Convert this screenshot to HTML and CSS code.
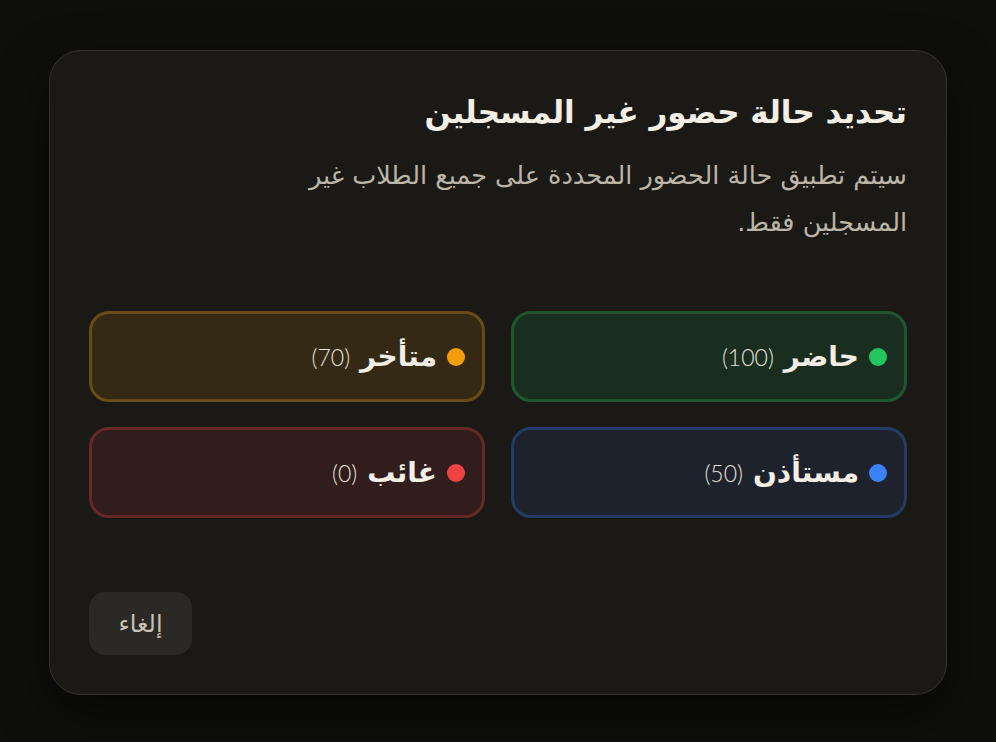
FILE: index.html
```html
<!DOCTYPE html>
<html lang="ar" dir="rtl">
<head>
<meta charset="utf-8">
<title>تحديد حالة حضور غير المسجلين</title>
<link rel="stylesheet" href="styles.css">
</head>
<body>
<div class="page">
  <div class="card">
    <h1 class="title">تحديد حالة حضور غير المسجلين</h1>
    <p class="desc">سيتم تطبيق حالة الحضور المحددة على جميع الطلاب غير المسجلين فقط.</p>
    <div class="options">
      <button class="opt opt-green"><span class="dot"></span><span class="label">حاضر</span><span class="count">(100)</span></button>
      <button class="opt opt-amber"><span class="dot"></span><span class="label">متأخر</span><span class="count">(70)</span></button>
      <button class="opt opt-blue"><span class="dot"></span><span class="label">مستأذن</span><span class="count">(50)</span></button>
      <button class="opt opt-red"><span class="dot"></span><span class="label">غائب</span><span class="count">(0)</span></button>
    </div>
    <div class="footer">
      <button class="cancel">إلغاء</button>
    </div>
  </div>
</div>
</body>
</html>
```
FILE: styles.css
```css
* { box-sizing: border-box; }
html, body {
  margin: 0;
  padding: 0;
  background: #0e0e0d;
}
body {
  font-family: "DejaVu Sans", "Noto Sans", sans-serif;
  width: 996px;
  height: 742px;
  overflow: hidden;
}
.page {
  width: 996px;
  height: 742px;
  display: flex;
  align-items: flex-start;
  justify-content: center;
  padding-top: 50px;
}
.card {
  width: 898px;
  height: 645px;
  background: #1a1916;
  border: 1px solid #34332f;
  border-radius: 32px;
  padding: 39px 39px 39px 39px;
  display: flex;
  flex-direction: column;
  box-shadow: 0 20px 50px rgba(0,0,0,0.5);
}
.title {
  margin: 0;
  font-size: 31px;
  line-height: 44px;
  font-weight: 700;
  color: #f3efe6;
}
.desc {
  margin: 18px 0 0 0;
  font-size: 25.5px;
  line-height: 47px;
  color: #bcb5a8;
  font-weight: 400;
  max-width: 680px;
}
.options {
  margin-top: 65px;
  display: grid;
  grid-template-columns: 1fr 1fr;
  column-gap: 26px;
  row-gap: 25px;
}
.opt {
  height: 91px;
  border: 3px solid;
  border-radius: 20px;
  display: flex;
  align-items: center;
  gap: 10px;
  padding: 0 17px;
  font-family: inherit;
  cursor: pointer;
  text-align: right;
}
.dot {
  width: 18px;
  height: 18px;
  border-radius: 50%;
  flex: none;
}
.label {
  font-size: 28px;
  font-weight: 700;
  color: #f3efe6;
}
.count {
  font-family: "Lato", "Inter", sans-serif;
  font-weight: 300;
  font-size: 23px;
  color: #e6e1d6;
}
.opt-green { background: #1a2e1f; border-color: #1f5630; }
.opt-green .dot { background: #22c55e; }
.opt-amber { background: #342914; border-color: #6a4a16; }
.opt-amber .dot { background: #f59e0b; }
.opt-blue { background: #1d222c; border-color: #233c66; }
.opt-blue .dot { background: #3b82f6; }
.opt-red { background: #301d1c; border-color: #642a27; }
.opt-red .dot { background: #ef4444; }
.footer {
  margin-top: auto;
  display: flex;
  justify-content: flex-end;
}
.cancel {
  height: 63px;
  padding: 0 22px;
  min-width: 103px;
  border: none;
  border-radius: 16px;
  background: #2a2925;
  color: #c8c1b4;
  font-family: inherit;
  font-size: 24px;
  cursor: pointer;
}
```
